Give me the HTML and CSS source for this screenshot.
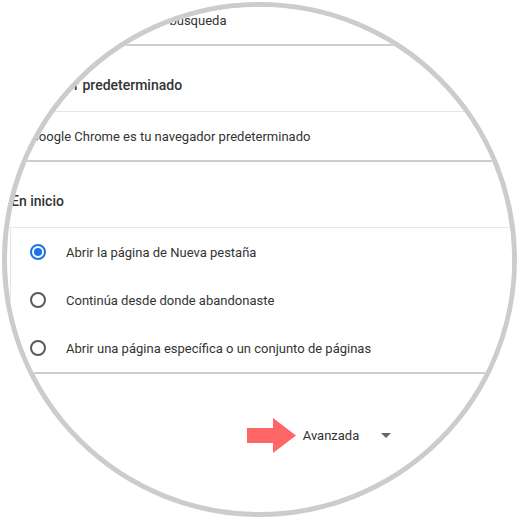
FILE: index.html
```html
<!DOCTYPE html>
<html lang="es">
<head>
  <meta charset="UTF-8" />
  <title>Configuración</title>
  <link rel="stylesheet" href="styles.css">
</head>
<body>
  <div class="lens">
    <div class="page">
      <section class="card">
        <div class="row">Administrar motores de búsqueda</div>
      </section>

      <h2 class="section-title">Navegador predeterminado</h2>
      <section class="card">
        <div class="row">Google Chrome es tu navegador predeterminado</div>
      </section>

      <h2 class="section-title">En inicio</h2>
      <section class="card">
        <div class="radio-row"><span class="radio checked"></span>Abrir la página de Nueva pestaña</div>
        <div class="radio-row"><span class="radio"></span>Continúa desde donde abandonaste</div>
        <div class="radio-row"><span class="radio"></span>Abrir una página específica o un conjunto de páginas</div>
      </section>

      <div class="advanced">
        <div class="advanced-btn">
          <svg class="pointer" width="49" height="35" viewBox="0 0 49 35">
            <rect x="0" y="10" width="27" height="15" fill="#ff6666"/>
            <polygon points="26,0 49,17.5 26,35" fill="#ff6666"/>
          </svg>
          <span>Avanzada</span>
          <span class="caret"></span>
        </div>
      </div>
    </div>
  </div>
</body>
</html>
```

FILE: styles.css
```css
body {
  margin: 0;
  background: #fff;
  font-family: Roboto, 'Liberation Sans', sans-serif;
  font-size: 13px;
  color: #333;
}

/* magnifier circle */
.lens {
  box-sizing: border-box;
  width: 515px;
  height: 515px;
  margin: 2px 0 0 2px;
  border: 5px solid #cccccc;
  border-radius: 50%;
  overflow: hidden;
  background: #fff;
}

.page {
  width: 674px;
  margin: -12px 0 0 3px;
}

.card {
  background: #fff;
  border-top: 1px solid #e6e6e6;
  border-left: 1px solid #e6e6e6;
  border-bottom: 2px solid #cdcdcd;
}

.row {
  height: 48px;
  display: flex;
  align-items: center;
  padding: 0 19px;
}

.section-title {
  margin: 0;
  padding: 29px 0 16px 1px;
  font-size: 14px;
  font-weight: 500;
  line-height: 20px;
  color: #333;
}

.radio-row {
  height: 48px;
  display: flex;
  align-items: center;
  gap: 20px;
  padding: 0 19px;
}

.radio {
  box-sizing: border-box;
  width: 16px;
  height: 16px;
  border: 2px solid #5a5a5a;
  border-radius: 50%;
  display: flex;
  align-items: center;
  justify-content: center;
}

.radio.checked {
  border-color: #1a73e8;
}

.radio.checked::after {
  content: '';
  width: 8px;
  height: 8px;
  border-radius: 50%;
  background: #1a73e8;
}

.advanced {
  display: flex;
  justify-content: center;
  margin-top: 43px;
}

.advanced-btn {
  position: relative;
  height: 36px;
  display: flex;
  align-items: center;
  gap: 22px;
  color: #333;
}

.pointer {
  position: absolute;
  right: calc(100% + 7px);
  top: 1px;
}

.caret {
  width: 0;
  height: 0;
  border-left: 5px solid transparent;
  border-right: 5px solid transparent;
  border-top: 5px solid #666;
}
```
